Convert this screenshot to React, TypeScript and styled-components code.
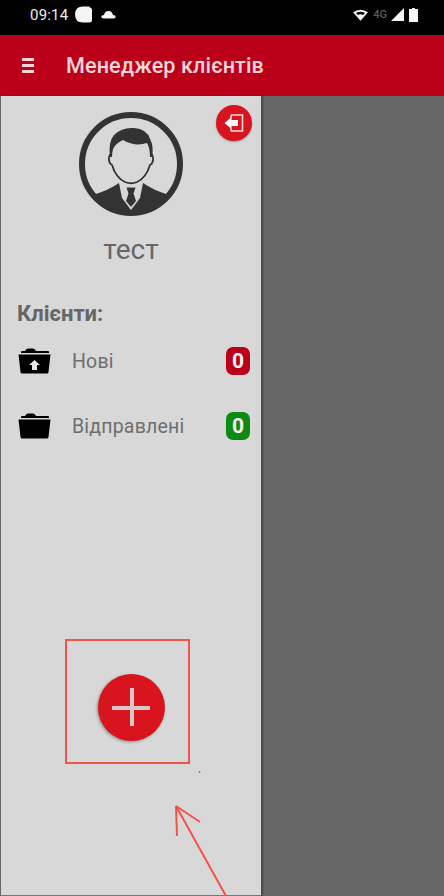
import styled, { createGlobalStyle } from "styled-components";

const GlobalStyle = createGlobalStyle`
  html, body {
    margin: 0;
    padding: 0;
    background: #666;
    font-family: Roboto, "Liberation Sans", sans-serif;
  }
`;

const Screen = styled.div`
  position: relative;
  width: 444px;
  height: 896px;
  display: flex;
  flex-direction: column;
  overflow: hidden;
`;

const StatusBar = styled.div`
  height: 35px;
  flex: none;
  background: #000;
  display: flex;
  align-items: center;
  justify-content: space-between;
  padding: 0 26px 6px 30px;
  box-sizing: border-box;
  color: #eee;
`;

const StatusGroup = styled.div`
  display: flex;
  align-items: center;
`;

const Time = styled.span`
  font-size: 15px;
  letter-spacing: 0.2px;
  margin-right: 7px;
`;

const NetworkLabel = styled.span`
  font-size: 11px;
  font-weight: 500;
  color: #5c5c5c;
  margin: 0 4px 0 5px;
`;

const AppBar = styled.div`
  height: 61px;
  flex: none;
  background: #bb0019;
  display: flex;
  align-items: center;
  padding: 0 0 0 22px;
  box-sizing: border-box;
`;

const Burger = styled.div`
  width: 12px;
  height: 15px;
  display: flex;
  flex-direction: column;
  justify-content: space-between;
  margin-right: 32px;
`;

const BurgerLine = styled.span`
  height: 3px;
  background: #f6d5da;
`;

const Title = styled.div`
  font-size: 21.6px;
  font-weight: 500;
  color: #f6d5da;
  letter-spacing: 0.1px;
`;

const Body = styled.div`
  flex: 1;
  display: flex;
  min-height: 0;
`;

const Drawer = styled.div`
  position: relative;
  width: 260px;
  margin-left: 1px;
  flex: none;
  box-sizing: border-box;
  background: #d8d8d8;
  border-bottom: 1px solid #777;
  display: flex;
  flex-direction: column;
  box-shadow: 2px 0 2px rgba(0, 0, 0, 0.3);
`;

const Scrim = styled.div`
  flex: 1;
  background: #666;
`;

const LogoutButton = styled.div`
  position: absolute;
  top: 9px;
  right: 9px;
  width: 36px;
  height: 36px;
  border-radius: 50%;
  background: #d8141f;
  box-shadow: 0 1px 2px rgba(0, 0, 0, 0.3);
  display: flex;
  align-items: center;
  justify-content: center;
`;

const Profile = styled.div`
  display: flex;
  flex-direction: column;
  align-items: center;
  padding-top: 16px;
`;

const UserName = styled.div`
  margin-top: 17px;
  font-size: 28px;
  line-height: 34px;
  color: #666;
`;

const SectionTitle = styled.div`
  margin: 34px 0 0 16px;
  font-size: 22px;
  line-height: 26px;
  font-weight: 700;
  color: #666;
`;

const RowList = styled.div`
  margin-top: 1px;
`;

const ClientRow = styled.div`
  height: 65px;
  display: flex;
  align-items: center;
  padding: 0 11px 0 17px;
`;

const RowIcon = styled.div`
  width: 33px;
  height: 28px;
  margin-right: 21px;
  display: flex;
  align-items: center;
`;

const RowLabel = styled.div`
  flex: 1;
  padding-top: 1px;
  font-size: 19.5px;
  color: #6e6e6e;
  letter-spacing: 0.2px;
`;

const CountBadge = styled.div<{ $color: string }>`
  width: 24px;
  height: 28px;
  border-radius: 7px;
  background: ${(p) => p.$color};
  color: #f3f3f3;
  font-size: 21px;
  font-weight: 700;
  display: flex;
  align-items: center;
  justify-content: center;
`;

const AddArea = styled.div`
  margin-top: auto;
  padding-bottom: 154px;
  display: flex;
  justify-content: center;
`;

const AddButton = styled.div`
  width: 67px;
  height: 67px;
  border-radius: 50%;
  background: #d8141f;
  box-shadow: -1px 1px 3px rgba(0, 0, 0, 0.35);
  position: relative;
`;

const PlusBar = styled.span<{ $vertical?: boolean }>`
  position: absolute;
  background: #d8c8c8;
  left: ${(p) => (p.$vertical ? "32px" : "14px")};
  top: ${(p) => (p.$vertical ? "14px" : "32px")};
  width: ${(p) => (p.$vertical ? "4px" : "38px")};
  height: ${(p) => (p.$vertical ? "38px" : "4px")};
`;

const HighlightBox = styled.div`
  position: absolute;
  left: 65px;
  top: 639px;
  width: 125px;
  height: 125px;
  box-sizing: border-box;
  border: 2px solid #f4534a;
`;

const ArrowLayer = styled.svg`
  position: absolute;
  left: 0;
  top: 0;
`;

const SmallIcon = styled.svg`
  display: block;
`;

const FolderOpen = ({ upload }: { upload?: boolean }) => (
  <SmallIcon width="33" height="26" viewBox="0 0 33 26">
    <path d="M3 5 L3 4 Q3 3 4 3 L7 3 Q8 0.5 10 0.5 L15 0.5 Q17 0.5 18 3 L30 3 Q31 3 31 4 L31 5 Z" fill="#000" />
    <path d="M0.5 6.5 L32.5 6.5 L30.5 24 Q30.3 25.5 29 25.5 L4 25.5 Q2.7 25.5 2.5 24 Z" fill="#000" />
    {upload && <path d="M16.5 12 L22 17 L19 17 L19 22 L14 22 L14 17 L11 17 Z" fill="#e8e8e8" />}
  </SmallIcon>
);

const Avatar = () => (
  <SmallIcon width="104" height="104" viewBox="0 0 104 104">
    <defs>
      <clipPath id="avatarClip">
        <circle cx="52" cy="52" r="47" />
      </clipPath>
    </defs>
    <circle cx="52" cy="52" r="49" fill="none" stroke="#333" strokeWidth="6" />
    <g clipPath="url(#avatarClip)">
      <path d="M14 83 Q30 78 40 71 L43 86 L52 98 L61 86 L64 71 Q74 78 90 83 L92 106 L12 106 Z" fill="#333" />
    </g>
    <path d="M47.5 75.5 L56.5 75.5 L54.5 81.5 L57 89 L52 95 L47 89 L49.5 81.5 Z" fill="#333" />
    <path
      d="M31 42 Q28 50 33 53 Q37 66 46 70 Q52 72.5 58 70 Q67 66 71 53 Q76 50 73 42"
      fill="none"
      stroke="#333"
      strokeWidth="1.8"
    />
    <path
      d="M31 45 Q29 30 35 23 Q43 15 55 16 Q68 17 71 27 Q75 34 73 45 L71 45 Q71 36 68 31 Q56 35 44 28 Q37 31 34 37 Q33 41 33 45 Z"
      fill="#333"
    />
  </SmallIcon>
);

export default function App() {
  return (
    <Screen>
      <GlobalStyle />
      <StatusBar>
        <StatusGroup>
          <Time>09:14</Time>
          <SmallIcon width="17" height="17" viewBox="0 0 17 17">
            <path d="M8 0.5 L14 0.5 L17 3 L17 14 Q17 16.5 14 16.5 L8 16.5 Q0 16.5 0 8.5 Q0 0.5 8 0.5 Z" fill="#f5f5f5" />
          </SmallIcon>
          <SmallIcon width="15" height="9" viewBox="0 0 16 10" style={{ marginLeft: 9 }}>
            <path d="M2.5 9.5 Q0 9.5 0 7.5 Q0 5.5 3 5.5 Q4 1 8 1 Q12 1 13 5.5 Q16 5.5 16 7.5 Q16 9.5 13.5 9.5 Z" fill="#f5f5f5" />
          </SmallIcon>
        </StatusGroup>
        <StatusGroup>
          <SmallIcon width="15" height="12" viewBox="0 0 17 13">
            <path d="M8.5 13 L0 3.5 Q8.5 -2.5 17 3.5 Z" fill="#f5f5f5" />
            <path d="M3.5 4.2 Q8.5 1.5 13.5 4.2 L11.5 6.5 Q8.5 5 5.5 6.5 Z" fill="#000" />
          </SmallIcon>
          <NetworkLabel>4G</NetworkLabel>
          <SmallIcon width="13" height="13" viewBox="0 0 13 13">
            <path d="M13 0 L13 13 L0 13 Z" fill="#f5f5f5" />
          </SmallIcon>
          <SmallIcon width="9" height="14" viewBox="0 0 9 14" style={{ marginLeft: 5 }}>
            <path d="M3 0 L6 0 L6 1 L9 1 L9 14 L0 14 L0 1 L3 1 Z" fill="#f5f5f5" />
          </SmallIcon>
        </StatusGroup>
      </StatusBar>
      <AppBar>
        <Burger>
          <BurgerLine />
          <BurgerLine />
          <BurgerLine />
        </Burger>
        <Title>Менеджер клієнтів</Title>
      </AppBar>
      <Body>
        <Drawer>
          <LogoutButton>
            <SmallIcon width="20" height="18" viewBox="0 0 20 18">
              <path d="M7 1 L18.5 1 L18.5 17 L7 17 M7 1 L7 4 M7 14 L7 17" fill="none" stroke="#f3dcdc" strokeWidth="1.6" />
              <path d="M0.5 9 L7.5 3 L7.5 6 L14 6 L14 12 L7.5 12 L7.5 15 Z" fill="#fff" />
            </SmallIcon>
          </LogoutButton>
          <Profile>
            <Avatar />
            <UserName>тест</UserName>
          </Profile>
          <SectionTitle>Клієнти:</SectionTitle>
          <RowList>
            <ClientRow>
              <RowIcon>
                <FolderOpen upload />
              </RowIcon>
              <RowLabel>Нові</RowLabel>
              <CountBadge $color="#bb0019">0</CountBadge>
            </ClientRow>
            <ClientRow>
              <RowIcon>
                <FolderOpen />
              </RowIcon>
              <RowLabel>Відправлені</RowLabel>
              <CountBadge $color="#0e8a12">0</CountBadge>
            </ClientRow>
          </RowList>
          <AddArea>
            <AddButton>
              <PlusBar />
              <PlusBar $vertical />
            </AddButton>
          </AddArea>
        </Drawer>
        <Scrim />
      </Body>
      <HighlightBox />
      <ArrowLayer width="444" height="896" viewBox="0 0 444 896">
        <circle cx="199.5" cy="772" r="1" fill="#f4534a" />
        <path d="M226 896 L176 806 M176 806 L177 836 M176 806 L200 822" fill="none" stroke="#f4534a" strokeWidth="2" />
      </ArrowLayer>
    </Screen>
  );
}
